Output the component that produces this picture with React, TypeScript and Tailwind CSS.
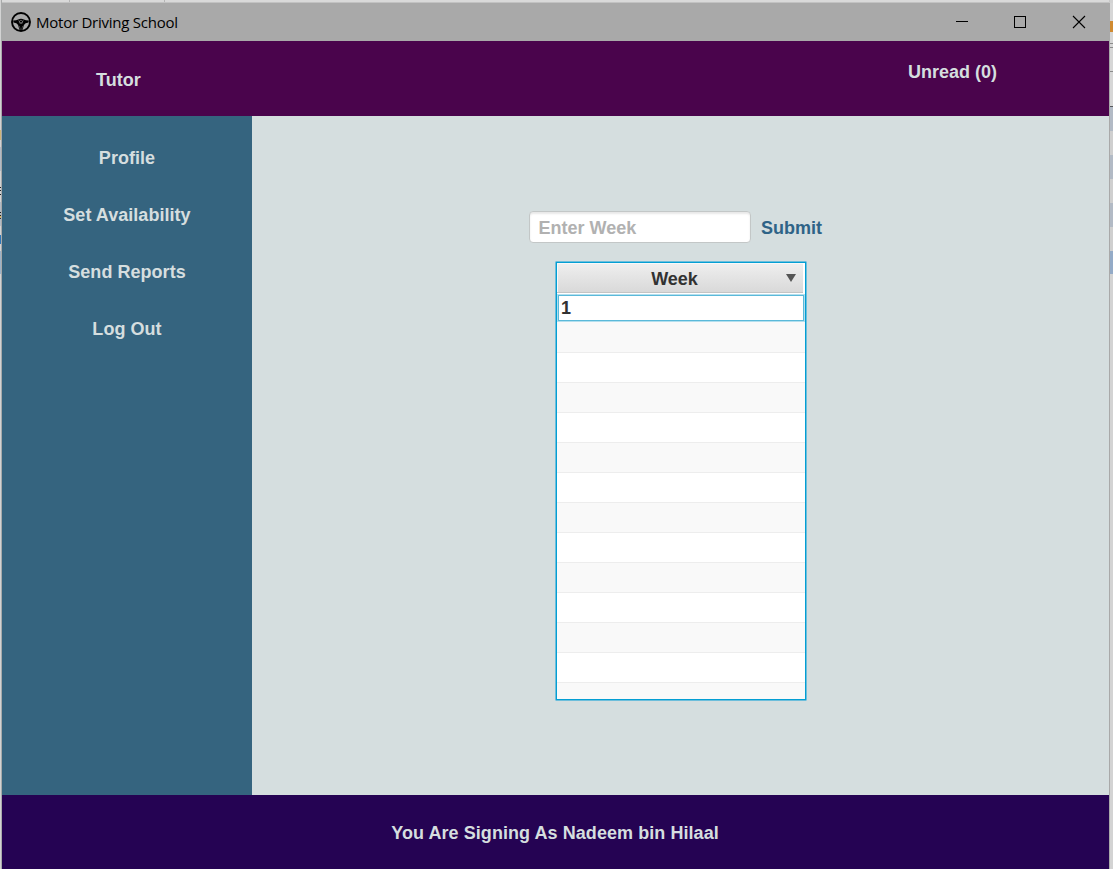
import React from "react";

const navItems = ["Profile", "Set Availability", "Send Reports", "Log Out"];
const emptyRows = Array.from({ length: 13 }, (_, i) => i);

const leftEdge = [
  "h-[130px] bg-[#d3d3d3]",
  "h-[10px] bg-[#cfb477]",
  "h-[7px] bg-[#d3d3d3]",
  "h-6 bg-[#b4bcc6]",
  "h-4 bg-[#d3d3d3]",
  "h-px bg-[#222222]",
  "h-[2px] bg-[#d3d3d3]",
  "h-px bg-[#222222]",
  "h-[3px] bg-[#d3d3d3]",
  "h-px bg-[#222222]",
  "h-[7px] bg-[#d3d3d3]",
  "h-[10px] bg-[#b4bcc6]",
  "h-px bg-[#222222]",
  "h-[2px] bg-[#b4bcc6]",
  "h-px bg-[#222222]",
  "h-[2px] bg-[#d8b45f]",
  "h-px bg-[#26374f]",
  "h-[7px] bg-[#b4bcc6]",
  "h-[9px] bg-[#d3d3d3]",
  "h-[9px] bg-[#2f77b8]",
  "h-[7px] bg-[#d3d3d3]",
  "h-[23px] bg-[#9eb3c8]",
  "flex-1 bg-[#d3d3d3]",
];

const rightEdge = [
  "h-[18px] bg-[#d6d6d6]",
  "h-[11px] bg-[#d08a30]",
  "h-[11px] bg-[#d6d6d6]",
  "h-px bg-[#8a8a8a]",
  "h-[3px] bg-[#d6d6d6]",
  "h-px bg-[#8a8a8a]",
  "h-[23px] bg-[#d6d6d6]",
  "h-px bg-[#8a8a8a]",
  "h-[34px] bg-[#d6d6d6]",
  "h-px bg-[#55585c]",
  "h-6 bg-[#b2bac5]",
  "h-6 bg-[#cfcfcf]",
  "h-6 bg-[#b2bac5]",
  "h-6 bg-[#cfcfcf]",
  "h-6 bg-[#b2bac5]",
  "h-6 bg-[#cfcfcf]",
  "h-[23px] bg-[#94abc7]",
  "flex-1 bg-[#d3d3d3]",
];

function SteeringWheel() {
  return (
    <svg className="h-5 w-5 shrink-0" viewBox="0 0 20 20">
      <circle cx="10" cy="10" r="9" fill="none" stroke="#000" strokeWidth="1.9" />
      <path d="M2.2 8.6 Q5.5 8.4 7.2 7.4 Q10 6.2 12.8 7.4 Q14.5 8.4 17.8 8.6 L17.6 10.6 Q14 11 12.9 13 L11.6 17.8 H8.4 L7.1 13 Q6 11 2.4 10.6 Z" fill="#000" />
      <path d="M7.4 8.6 L10 11 L12.6 8.6" fill="none" stroke="#9a9a9a" strokeWidth="0.6" />
      <circle cx="10" cy="10" r="1.7" fill="none" stroke="#8a8a8a" strokeWidth="0.6" />
      <path d="M8.3 14 L9.2 17 M11.7 14 L10.8 17" stroke="#777" strokeWidth="0.5" />
    </svg>
  );
}

function TitleBar() {
  return (
    <div className="flex h-[38px] items-center bg-[#a9a9a9] pl-[9px] font-normal text-black">
      <SteeringWheel />
      <span className="ml-[5px] whitespace-nowrap font-['Open_Sans','Noto_Sans',sans-serif] text-[15px] leading-5 tracking-[-0.24px]">
        Motor Driving School
      </span>
      <div className="ml-auto flex pr-[23px]">
        <svg className="h-[14px] w-[14px]" viewBox="0 0 14 14" shapeRendering="crispEdges">
          <path d="M1 6.5H13" stroke="#000" />
        </svg>
        <svg className="ml-[44px] h-[14px] w-[14px]" viewBox="0 0 14 14" shapeRendering="crispEdges">
          <rect x="1.5" y="1.5" width="11" height="11" fill="none" stroke="#000" />
        </svg>
        <svg className="ml-[45px] h-[14px] w-[14px]" viewBox="0 0 14 14">
          <path d="M1 1L13 13M13 1L1 13" stroke="#000" strokeWidth="1.1" />
        </svg>
      </div>
    </div>
  );
}

function WeekTable() {
  return (
    <div className="ml-[303px] mt-[18px] flex h-[440px] w-[252px] flex-col rounded-[1px] border border-[#6dbedb] bg-white">
      <div className="flex min-h-0 flex-1 flex-col overflow-hidden border border-[#039ed3]">
        <div className="mb-px mr-0.5 flex h-[30px] shrink-0 items-center border-b border-[#c4c4c4] bg-linear-to-b from-[#efefef] to-[#d9d9d9] shadow-[inset_1px_1px_0_#f8f8f8]">
          <span className="flex-1 pl-[6px] pt-[2px] text-center text-[#323232]">Week</span>
          <svg className="mr-[7px] h-2 w-[10px]" viewBox="0 0 10 8">
            <path d="M0 0H10L5 8Z" fill="#555" />
          </svg>
        </div>
        <div className="flex h-7 shrink-0 border border-[#b3dfee]">
          <div className="flex flex-1 items-center border border-[#5bb9d9] pl-0.5 text-[#323232]">
            1
          </div>
        </div>
        {emptyRows.map((i) => (
          <div
            key={i}
            className="h-[30px] shrink-0 border-b border-[#ededed] odd:bg-white even:bg-[#f9f9f9] nth-3:h-[31px] nth-[even]:bg-white nth-[odd]:bg-[#f9f9f9]"
          />
        ))}
      </div>
    </div>
  );
}

export default function App() {
  return (
    <div className="flex h-[869px] w-[1113px] overflow-hidden bg-[#d3d3d3] font-['Liberation_Sans',Arial,sans-serif] text-[18px] leading-5 font-bold text-[#d5dedf]">
      <div className="flex w-px flex-col">
        {leftEdge.map((segment, i) => (
          <div key={i} className={segment} />
        ))}
      </div>
      <div className="w-px bg-[#a8aaaa]" />
      <div className="flex w-[1107px] flex-col">
        <div className="flex h-[3px] border-b border-[#c2c2c2] bg-[#d9d9d9]">
          <div className="ml-[67px] w-px bg-[#b5b5b5]" />
          <div className="ml-[94px] w-px bg-[#b5b5b5]" />
        </div>
        <TitleBar />
        <header className="flex h-[75px] justify-between bg-[#4a044c] pl-[94px] pr-[112px]">
          <span className="pt-[29px]">Tutor</span>
          <span className="pt-[21px]">Unread (0)</span>
        </header>
        <div className="flex h-[679px]">
          <nav className="flex w-[250px] flex-col items-center gap-[37px] bg-[#35647f] pt-8">
            {navItems.map((item) => (
              <button key={item} className="h-5 whitespace-nowrap tracking-[0.04px]">{item}</button>
            ))}
          </nav>
          <main className="flex-1 bg-[#d5dedf]">
            <div className="ml-[277px] mt-[95px] flex h-8 items-center">
              <input
                placeholder="Enter Week"
                className="h-8 w-[222px] rounded-[4px] border border-[#c3c7c7] bg-white pl-[8.5px] pt-[2px] shadow-[inset_0_2px_2px_#e8e8e8] placeholder:text-[#b1b1b1]"
              />
              <button className="ml-[10px] pt-[2px] text-[#2e6387]">Submit</button>
            </div>
            <WeekTable />
          </main>
        </div>
        <footer className="flex-1 bg-[#250353] pr-px pt-7 text-center tracking-[0.06px]">
          You Are Signing As Nadeem bin Hilaal
        </footer>
      </div>
      <div className="flex w-px flex-col">
        <div className="h-[3px] bg-[#c8c8c8]" />
        <div className="flex-1 bg-[#a9a9a9]" />
      </div>
      <div className="flex w-[3px] flex-col pt-[3px]">
        {rightEdge.map((segment, i) => (
          <div key={i} className={segment} />
        ))}
      </div>
    </div>
  );
}
